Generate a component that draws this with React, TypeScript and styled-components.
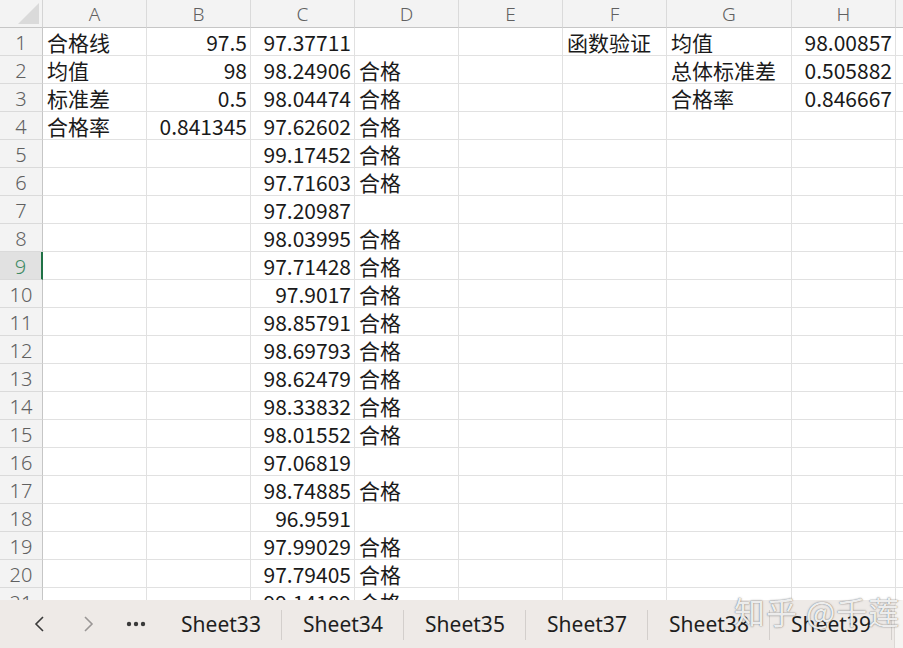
import React from "react";
import styled, { createGlobalStyle } from "styled-components";

const Global = createGlobalStyle`
  html, body { margin: 0; padding: 0; background: #ffffff; }
  body { width: 903px; height: 648px; overflow: hidden; font-family: "Noto Sans CJK SC", "Noto Sans", sans-serif; }
  * { box-sizing: border-box; }
`;

const Page = styled.div`
  position: relative;
  width: 903px;
  height: 648px;
  display: flex;
  flex-direction: column;
  overflow: hidden;
`;

const Sheet = styled.div`
  height: 600px;
  overflow: hidden;
  display: grid;
  grid-template-columns: 43px repeat(6, 104px) 125px 104px 1fr;
  grid-auto-rows: 28px;
  background: #ffffff;
`;

const Corner = styled.div`
  position: relative;
  background: #f3f3f3;
  border-right: 1px solid #d4d4d4;
  border-bottom: 1px solid #c6c6c6;
  overflow: hidden;
`;

const CornerTri = styled.div`
  position: absolute;
  right: 3px;
  bottom: 3px;
  width: 0;
  height: 0;
  border-left: 21px solid transparent;
  border-bottom: 21px solid #dadada;
`;

const ColHead = styled.div`
  background: #f3f3f3;
  border-right: 1px solid #dadada;
  border-bottom: 1px solid #c6c6c6;
  color: #606060;
  font-family: "Noto Sans", "Noto Sans CJK SC", sans-serif;
  font-size: 19px;
  font-weight: 300;
  display: flex;
  align-items: center;
  justify-content: center;
  line-height: 1;
  padding-top: 1px;
`;

const RowHead = styled.div<{ $selected?: boolean }>`
  background: ${(p) => (p.$selected ? "#e1e1e1" : "#f3f3f3")};
  border-right: ${(p) => (p.$selected ? "2px solid #1f7145" : "1px solid #c6c6c6")};
  border-bottom: 1px solid #dadada;
  color: ${(p) => (p.$selected ? "#3f8a64" : "#606060")};
  font-family: "Noto Sans", "Noto Sans CJK SC", sans-serif;
  font-size: 20px;
  font-weight: 300;
  display: flex;
  align-items: center;
  justify-content: center;
  line-height: 1;
  padding-top: 2px;
`;

const Cell = styled.div<{ $num?: boolean }>`
  border-right: 1px solid #e1e1e1;
  border-bottom: 1px solid #e1e1e1;
  color: #1a1a1a;
  font-size: 21px;
  line-height: 1;
  display: flex;
  align-items: center;
  justify-content: ${(p) => (p.$num ? "flex-end" : "flex-start")};
  padding: 2px 3px 0 4px;
  white-space: nowrap;
  overflow: visible;
`;

const TabBar = styled.div`
  position: relative;
  height: 48px;
  background: #eeeae7;
  display: flex;
  align-items: center;
`;

const NavBtn = styled.div<{ $disabled?: boolean }>`
  width: 48px;
  height: 48px;
  display: flex;
  align-items: center;
  justify-content: center;
  color: ${(p) => (p.$disabled ? "#9a9796" : "#3a3a3a")};
`;

const NavGroup = styled.div`
  display: flex;
  align-items: center;
  padding-left: 16px;
  width: 160px;
`;

const Tab = styled.div`
  width: 122px;
  height: 48px;
  display: flex;
  align-items: center;
  justify-content: center;
  font-family: "Noto Sans", "Noto Sans CJK SC", sans-serif;
  font-size: 21px;
  color: #1e1e1e;
  position: relative;
  padding-bottom: 1px;
  &::after {
    content: "";
    position: absolute;
    right: 0;
    top: 10px;
    bottom: 8px;
    width: 1px;
    background: #d3cfcc;
  }
`;

const EndPanel = styled.div`
  position: absolute;
  right: 0;
  top: 0;
  width: 9px;
  height: 48px;
  background: #f6f4f2;
  border-top-left-radius: 8px;
  border-left: 1px solid #dcd8d5;
`;

const Watermark = styled.div`
  position: absolute;
  left: 734px;
  top: 588px;
  font-family: "Noto Sans CJK SC", sans-serif;
  font-size: 31px;
  letter-spacing: 1px;
  color: rgba(255, 255, 255, 0.9);
  text-shadow: 0 0 1px rgba(70, 70, 70, 0.7), 0 0 2px rgba(100, 100, 100, 0.5);
  pointer-events: none;
  white-space: nowrap;
`;

type Row = [string, string, string, string, string, string, string, string, string];

const rows: Row[] = [
  ["合格线", "97.5", "97.37711", "", "", "函数验证", "均值", "98.00857", ""],
  ["均值", "98", "98.24906", "合格", "", "", "总体标准差", "0.505882", ""],
  ["标准差", "0.5", "98.04474", "合格", "", "", "合格率", "0.846667", ""],
  ["合格率", "0.841345", "97.62602", "合格", "", "", "", "", ""],
  ["", "", "99.17452", "合格", "", "", "", "", ""],
  ["", "", "97.71603", "合格", "", "", "", "", ""],
  ["", "", "97.20987", "", "", "", "", "", ""],
  ["", "", "98.03995", "合格", "", "", "", "", ""],
  ["", "", "97.71428", "合格", "", "", "", "", ""],
  ["", "", "97.9017", "合格", "", "", "", "", ""],
  ["", "", "98.85791", "合格", "", "", "", "", ""],
  ["", "", "98.69793", "合格", "", "", "", "", ""],
  ["", "", "98.62479", "合格", "", "", "", "", ""],
  ["", "", "98.33832", "合格", "", "", "", "", ""],
  ["", "", "98.01552", "合格", "", "", "", "", ""],
  ["", "", "97.06819", "", "", "", "", "", ""],
  ["", "", "98.74885", "合格", "", "", "", "", ""],
  ["", "", "96.9591", "", "", "", "", "", ""],
  ["", "", "97.99029", "合格", "", "", "", "", ""],
  ["", "", "97.79405", "合格", "", "", "", "", ""],
  ["", "", "99.14189", "合格", "", "", "", "", ""],
];

const cols = ["A", "B", "C", "D", "E", "F", "G", "H", ""];
const isNum = (s: string) => /^[0-9.]+$/.test(s);

export default function App() {
  return (
    <Page>
      <Global />
      <Sheet>
        <Corner>
          <CornerTri />
        </Corner>
        {cols.map((c, i) => (
          <ColHead key={"h" + i}>{c}</ColHead>
        ))}
        {rows.map((r, ri) => (
          <React.Fragment key={ri}>
            <RowHead $selected={ri === 8}>{ri + 1}</RowHead>
            {r.map((v, ci) => (
              <Cell key={ci} $num={isNum(v)}>
                {v}
              </Cell>
            ))}
          </React.Fragment>
        ))}
      </Sheet>
      <TabBar>
        <NavGroup>
          <NavBtn>
            <svg width="14" height="20" viewBox="0 0 14 20" fill="none">
              <path d="M10 3 L3 10 L10 17" stroke="currentColor" strokeWidth="1.6" />
            </svg>
          </NavBtn>
          <NavBtn $disabled>
            <svg width="14" height="20" viewBox="0 0 14 20" fill="none">
              <path d="M4 3 L11 10 L4 17" stroke="currentColor" strokeWidth="1.6" />
            </svg>
          </NavBtn>
          <NavBtn>
            <svg width="20" height="8" viewBox="0 0 20 8" fill="#3a3a3a">
              <circle cx="3" cy="4" r="2.2" />
              <circle cx="10" cy="4" r="2.2" />
              <circle cx="17" cy="4" r="2.2" />
            </svg>
          </NavBtn>
        </NavGroup>
        {["Sheet33", "Sheet34", "Sheet35", "Sheet37", "Sheet38", "Sheet39"].map((s) => (
          <Tab key={s}>{s}</Tab>
        ))}
        <EndPanel />
      </TabBar>
      <Watermark>知乎 @千莲</Watermark>
    </Page>
  );
}
